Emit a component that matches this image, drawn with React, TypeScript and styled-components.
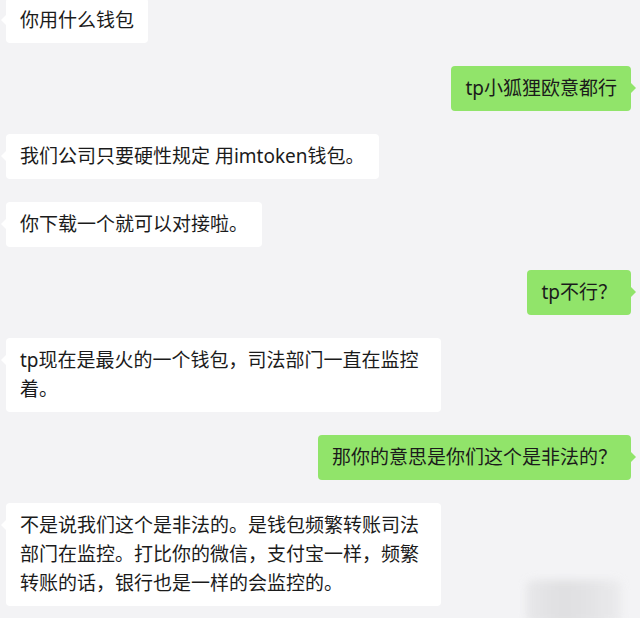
import React from "react";
import styled, { createGlobalStyle, css } from "styled-components";

const GlobalStyle = createGlobalStyle`
  html, body {
    margin: 0;
    padding: 0;
    background: #f3f3f5;
  }
  body {
    width: 640px;
    height: 618px;
    overflow: hidden;
    font-family: "Noto Sans", "Noto Sans CJK SC", sans-serif;
  }
`;

const Screen = styled.div`
  position: relative;
  width: 640px;
  height: 618px;
  overflow: hidden;
  background: #f3f3f5;
`;

const Thread = styled.div`
  display: flex;
  flex-direction: column;
  gap: 23px;
  padding: 0 9px 0 6px;
  margin-top: -2px;
`;

const Row = styled.div<{ $mine?: boolean }>`
  display: flex;
  justify-content: ${(p) => (p.$mine ? "flex-end" : "flex-start")};
`;

const Bubble = styled.div<{ $mine?: boolean }>`
  position: relative;
  box-sizing: border-box;
  max-width: 435px;
  padding: 8px 14px 8px 14px;
  border-radius: 4px;
  font-family: "Noto Sans", "Noto Sans CJK SC", sans-serif;
  font-size: 19px;
  line-height: 29px;
  color: #1b1b1b;
  word-break: break-all;
  background: ${(p) => (p.$mine ? "#91e46a" : "#ffffff")};

  &::before {
    content: "";
    position: absolute;
    top: 17px;
    width: 0;
    height: 0;
    border-top: 5px solid transparent;
    border-bottom: 5px solid transparent;
    ${(p) =>
      p.$mine
        ? css`
            right: -5px;
            border-left: 5px solid #91e46a;
          `
        : css`
            left: -5px;
            border-right: 5px solid #ffffff;
          `}
  }
`;

const Mosaic = styled.div`
  position: absolute;
  right: 18px;
  bottom: -6px;
  width: 96px;
  height: 44px;
  border-radius: 8px;
  background: linear-gradient(90deg, #e6e6e8 0%, #dcdcde 40%, #e2e2e4 70%, #ebebed 100%);
  filter: blur(4px);
  opacity: 0.85;
`;

type Msg = { mine?: boolean; text: string };

const messages: Msg[] = [
  { text: "你用什么钱包" },
  { mine: true, text: "tp小狐狸欧意都行" },
  { text: "我们公司只要硬性规定 用imtoken钱包。" },
  { text: "你下载一个就可以对接啦。" },
  { mine: true, text: "tp不行？" },
  { text: "tp现在是最火的一个钱包，司法部门一直在监控着。" },
  { mine: true, text: "那你的意思是你们这个是非法的？" },
  {
    text:
      "不是说我们这个是非法的。是钱包频繁转账司法部门在监控。打比你的微信，支付宝一样，频繁转账的话，银行也是一样的会监控的。",
  },
];

export default function App() {
  return (
    <>
      <GlobalStyle />
      <Screen>
        <Thread>
          {messages.map((m, i) => (
            <Row key={i} $mine={m.mine}>
              <Bubble $mine={m.mine}>{m.text}</Bubble>
            </Row>
          ))}
        </Thread>
        <Mosaic />
      </Screen>
    </>
  );
}
